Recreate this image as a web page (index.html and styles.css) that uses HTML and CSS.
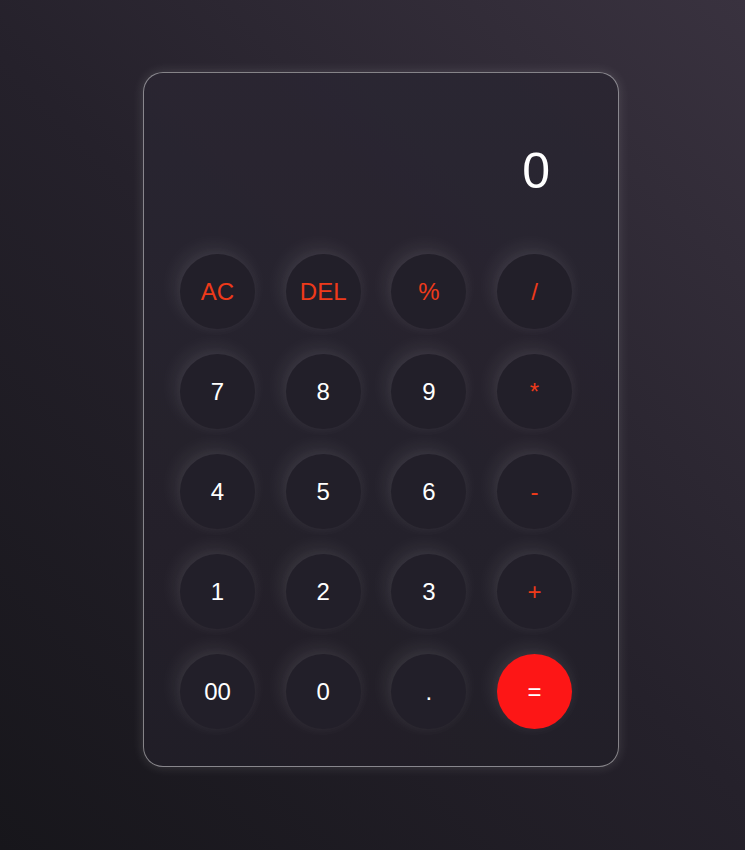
FILE: index.html
```html
<!DOCTYPE html>
<html>
<head>
<meta charset="utf-8">
<link rel="stylesheet" href="styles.css">
</head>
<body>
<div class="calculator">
  <div class="display">0</div>
  <div class="keys">
    <button class="key op">AC</button>
    <button class="key op">DEL</button>
    <button class="key op">%</button>
    <button class="key op">/</button>
    <button class="key">7</button>
    <button class="key">8</button>
    <button class="key">9</button>
    <button class="key op">*</button>
    <button class="key">4</button>
    <button class="key">5</button>
    <button class="key">6</button>
    <button class="key op">-</button>
    <button class="key">1</button>
    <button class="key">2</button>
    <button class="key">3</button>
    <button class="key op">+</button>
    <button class="key">00</button>
    <button class="key">0</button>
    <button class="key">.</button>
    <button class="key equal">=</button>
  </div>
</div>
</body>
</html>
```

FILE: styles.css
```css
* { box-sizing: border-box; }
html, body { height: 100%; }
body {
  margin: 0;
  padding-left: 17px;
  background: linear-gradient(45deg, #17161b 0%, #25212b 50%, #39323f 100%);
  font-family: "Liberation Sans", Arial, sans-serif;
  display: flex;
  justify-content: center;
  align-items: flex-start;
}
.calculator {
  margin-top: 72px;
  width: 476px;
  height: 695px;
  border: 1px solid rgba(255,255,255,0.45);
  border-radius: 20px;
  background: linear-gradient(180deg, rgba(42,38,50,0.9), rgba(34,31,40,0.9));
  box-shadow: 0 0 12px rgba(255,255,255,0.14);
  padding: 0 45px 0 36px;
}
.display {
  height: 181px;
  padding-top: 68px;
  padding-right: 23px;
  text-align: right;
  color: #ffffff;
  font-size: 50px;
  line-height: 60px;
}
.keys {
  display: grid;
  grid-template-columns: repeat(4, 75px);
  column-gap: 30.67px;
  row-gap: 25px;
}
.key {
  width: 75px;
  height: 75px;
  border-radius: 50%;
  border: none;
  background: #221f29;
  color: #ffffff;
  font-family: "Liberation Sans", Arial, sans-serif;
  font-size: 24px;
  padding: 0;
  box-shadow: -4px -6px 20px rgba(255,255,255,0.09), 0 0 16px rgba(255,255,255,0.04);
}
.key.op { color: #ee3a1a; }
.key.equal {
  background: #fd1616;
  color: #ffffff;
}
```
